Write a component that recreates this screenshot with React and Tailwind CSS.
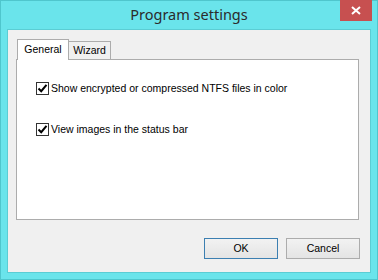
import React from 'react';

const Check = ({ label }) => (
  <label className="flex items-center gap-[2px] text-black">
    <span className="w-[13px] h-[13px] border border-[#333333] bg-white flex items-center justify-center">
      <svg width="11" height="11" viewBox="0 0 11 11">
        <path d="M1.5 5.5 L4.2 8.2 L9.5 1.8" fill="none" stroke="#000" strokeWidth="2" />
      </svg>
    </span>
    <span className="leading-[13px]">{label}</span>
  </label>
);

function App() {
  return (
    <div className="w-[378px] h-[280px] bg-[#6ae4eb] border border-[#4fc6cd] flex flex-col font-['Liberation_Sans',Arial,sans-serif] text-[10.5px]">
      <div className="relative h-[28px] flex items-center justify-center">
        <span className="font-['Noto_Sans',sans-serif] text-[14.5px] text-[#2b2b2b] pb-[1px]">Program settings</span>
        <div className="absolute right-[5px] top-[-1px] w-[32px] h-[21px] bg-[#c75050] flex items-center justify-center">
          <svg width="10" height="9" viewBox="0 0 10 9">
            <path d="M1 1 L9 8 M9 1 L1 8" stroke="#fff" strokeWidth="2" />
          </svg>
        </div>
      </div>
      <div className="mx-[6px] h-[244px] border border-[#5bcdd4] bg-[#f0f0f0] flex flex-col pt-[9px] pl-[8px] pr-[11px]">
        <div className="flex items-end h-[20px] pl-[1px]">
          <div className="w-[52px] h-[21px] -mb-px relative bg-white border border-[#acacac] border-b-0 flex items-center justify-center pb-[1px]">
            General
          </div>
          <div className="w-[42px] h-[18px] bg-[#f0f0f0] border border-[#acacac] border-l-0 border-b-0 flex items-center justify-center">
            Wizard
          </div>
        </div>
        <div className="h-[161px] bg-white border border-[#acacac] flex flex-col gap-[28px] pt-[22px] pl-[19px]">
          <Check label="Show encrypted or compressed NTFS files in color" />
          <Check label="View images in the status bar" />
        </div>
        <div className="flex justify-end gap-[8px] mt-[18px] -mr-[1px]">
          <button className="w-[74px] h-[21px] border border-[#3c7fb1] bg-gradient-to-b from-[#f2f2f2] to-[#e4e4e4] text-black">OK</button>
          <button className="w-[74px] h-[21px] border border-[#acacac] bg-gradient-to-b from-[#f2f2f2] to-[#e4e4e4] text-black">Cancel</button>
        </div>
      </div>
    </div>
  );
}

export default App;
